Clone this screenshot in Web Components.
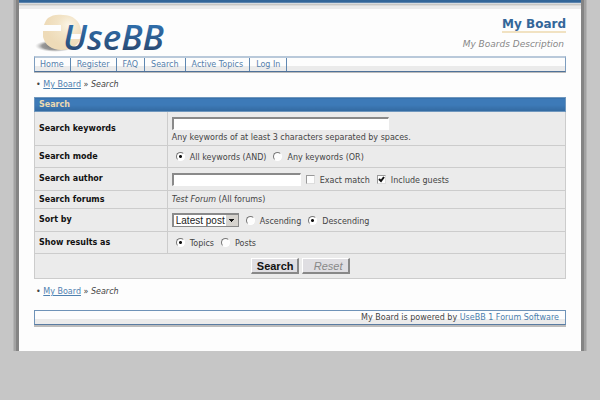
<!DOCTYPE html>
<html lang="en">
<head>
<meta charset="utf-8">
<title>My Board - Search</title>
<style>
html { background: #c6c6c6; }
body { margin: 0; font: 8px/12px "DejaVu Sans", Verdana, sans-serif; color: #444; }
board-crumbs:last-of-type { margin-bottom: 6px; }
</style>
</head>
<body>
<board-page>
  <board-header slot="header" name="My Board" description="My Boards Description"></board-header>
  <board-nav>
    <a href="#home">Home</a><a href="#register">Register</a><a href="#faq">FAQ</a><a href="#search">Search</a><a href="#active">Active Topics</a><a href="#login">Log In</a>
  </board-nav>
  <board-crumbs current="Search"><a href="#home">My Board</a></board-crumbs>
  <board-search></board-search>
  <board-crumbs current="Search"><a href="#home">My Board</a></board-crumbs>
  <board-footer>My Board is powered by <a href="#usebb">UseBB 1 Forum Software</a></board-footer>
</board-page>
<script>
function define(name, render) {
  customElements.define(name, class extends HTMLElement {
    constructor() {
      super();
      this.attachShadow({ mode: "open" });
    }
    connectedCallback() {
      if (this.shadowRoot.childNodes.length) return;
      const t = document.createElement("template");
      t.innerHTML = render(this);
      this.shadowRoot.append(t.content.cloneNode(true));
    }
  });
}

define("board-page", () => `
<style>
:host { display: block; margin: 0 13px; padding: 0 6px 0 6px;
  background:
    linear-gradient(90deg, #b4b4b4 1px, #a2a2a2 1px 3px, #848484 3px) left / 6px 100% no-repeat,
    linear-gradient(270deg, #b4b4b4 1px, #a2a2a2 1px 3px, #848484 3px) right / 6px 100% no-repeat; }
.strip { height: 9px; background: linear-gradient(#336699 2px, #5d84ad 2px 3px, #d8dcdf 3px 4px, #c9c7c3 4px 5px, #dcdcdc 5px 6px, #ebebeb 6px); }
main { background: #fdfdfd; padding: 0 15px 26px; }
</style>
<div class="strip"></div>
<main><slot name="header"></slot><slot></slot></main>`);

define("board-logo", () => `
<style>
:host { display: block; }
svg { display: block; overflow: visible; }
text { font: italic 600 35px "Open Sans", "Noto Sans", sans-serif; }
</style>
<svg width="150" height="46" viewBox="0 0 150 46" role="img" aria-label="UseBB">
  <defs>
    <linearGradient id="ink" x1="0" y1="0" x2="0" y2="1"><stop offset=".3" stop-color="#2f6ca8"/><stop offset=".8" stop-color="#2a4a74"/></linearGradient>
    <radialGradient id="globe" cx=".68" cy=".3" r=".6"><stop offset="0" stop-color="#fbf5e6"/><stop offset=".5" stop-color="#f2e3c6"/><stop offset="1" stop-color="#eedbb8"/></radialGradient>
    <radialGradient id="shade"><stop offset="0" stop-color="#777"/><stop offset=".65" stop-color="#999"/><stop offset="1" stop-color="#ccc" stop-opacity="0"/></radialGradient>
  </defs>
  <ellipse cx="21" cy="37" rx="20" ry="6" fill="url(#shade)"/>
  <path d="M14 9C18 6 23 5 29 6C39 6 46 12 47 21L47 26C46 36 38 41 27 41C18 41 11 36 9 28L9 22L27 22L27 16L10 16C11 13 12 11 14 9Z" fill="url(#globe)"/>
  <path d="M36 25H47V30H36Z" fill="#fdfdfd"/>
  <text x="29" y="41" fill="url(#ink)">UseBB</text>
</svg>`);

define("board-header", el => `
<style>
:host { display: flex; justify-content: space-between; align-items: flex-start; height: 47px; }
.title { text-align: right; padding-top: 8px; }
h1 { margin: 0 0 5px; display: inline-block; font-size: 12px; line-height: 14px; color: #336699; border-bottom: 2px solid #f1e2c2; }
p { margin: 0 2px 0 0; font-size: 9px; line-height: 12px; font-style: italic; color: #888; }
</style>
<board-logo></board-logo>
<div class="title"><h1>${el.getAttribute("name")}</h1><p>${el.getAttribute("description")}</p></div>`);

define("board-nav", () => `
<style>
:host { display: block; }
nav { display: flex; border: 1px solid #7d9dbf; border-top: 2px solid #b9c9da; border-bottom-color: #4f7299; background: linear-gradient(#fdfdfd 8px, #ebebeb 8px); box-shadow: 0 1px #bbb; }
::slotted(a) { padding: 0 6px; border-right: 1px solid #5f88b2; color: #5580ab; text-decoration: none; line-height: 13px; }
::slotted(a:first-child) { padding-left: 5px; }
</style>
<nav><slot></slot></nav>`);

define("board-crumbs", el => `
<style>
:host { display: block; padding: 7px 2px 6px; }
::slotted(a) { color: #4f81b0; }
nav { line-height: 12px; }
</style>
<nav>• <slot></slot> » <em>${el.getAttribute("current")}</em></nav>`);

define("board-search", () => `
<style>
:host { display: block; }
form { margin: 0; }
table { width: 100%; border-collapse: collapse; background: #ebebeb; }
th, td { border: 1px solid #ccc; padding: 0 4px; text-align: left; font-weight: normal; }
thead th { height: 13px; background: linear-gradient(#3d7ab8 50%, #33699f); border-color: #6f97be; color: #ecd9b0; font-weight: bold; line-height: 12px; }
tbody th { width: 25%; box-sizing: border-box; color: #111; font-weight: bold; }
td { color: #444; }
tbody tr { height: 22px; }
tbody tr.keys { height: 34px; }
tbody tr.tall { height: 23px; }
tbody tr.short { height: 18px; }
.line { display: flex; align-items: center; }
input[type=text], select { appearance: none; box-sizing: border-box; margin: 0; border: 1px solid #fff; border-top: 2px solid #8a8a8a; border-left: 2px solid #8a8a8a; background: #fff; border-radius: 0; height: 13px; padding: 0 2px; font: 8px "DejaVu Sans", sans-serif; }
.w1 { width: 217px; max-width: 100%; display: block; margin: 3px 0 2px; }
input.w1 { margin: 3px 0 2px; }
input.w2 { width: 129px; margin-right: 5px; }
select { height: 14px; width: 67px; font: 10px/11px "Liberation Sans", Arial, sans-serif; color: #222;
  background: linear-gradient(#111, #111) right 4px top 4px / 5px 1px no-repeat, linear-gradient(#111, #111) right 5px top 5px / 3px 1px no-repeat, linear-gradient(#111, #111) right 6px top 6px / 1px 1px no-repeat, linear-gradient(#d6d3ce, #d6d3ce) right / 12px 100% no-repeat, #fff;
  border-right-color: #888; border-bottom-color: #888; margin-right: 7px; }
input[type=radio], input[type=checkbox] { appearance: none; box-sizing: border-box; width: 9px; height: 9px; margin: 0 5px 0 0; background: #fdfdfd; border: 1px solid #fff; border-top-color: #777; border-left-color: #777; flex: none; }
input[type=radio] { border-radius: 50%; }
input[type=radio]:checked { background: radial-gradient(circle, #111 1px, #fff 2px); }
input[type=checkbox] { border-color: #999 #ddd #ddd #999; }
.tick { display: grid; }
.tick > * { grid-area: 1 / 1; }
.tick svg { pointer-events: none; }
label { margin-right: 7px; }
.line label { padding-top: 3px; }
.in { padding-left: 4px; }
.buttons { text-align: center; height: 24px; }
button { box-sizing: border-box; height: 16px; width: 48px; padding: 0 3px 0 0; border: 1px solid #fff; border-right: 2px solid #888; border-bottom: 2px solid #888; background: #dfdee2; font: bold 11px/12px "Liberation Sans", Arial, sans-serif; color: #111; text-align: right; }
button[type=reset] { font-weight: normal; font-style: italic; color: #888; padding-right: 5px; }
.pair { display: flex; justify-content: center; gap: 3px; }
</style>
<form onsubmit="return false">
<table>
  <thead><tr><th colspan="2">Search</th></tr></thead>
  <tbody>
    <tr class="keys"><th scope="row"><label for="kw">Search keywords</label></th><td><input class="w1" type="text" id="kw">Any keywords of at least 3 characters separated by spaces.</td></tr>
    <tr><th scope="row">Search mode</th><td><div class="line in"><input type="radio" name="mode" id="and" checked><label for="and">All keywords (AND)</label><input type="radio" name="mode" id="or"><label for="or">Any keywords (OR)</label></div></td></tr>
    <tr class="tall"><th scope="row"><label for="author">Search author</label></th><td><div class="line"><input class="w2" type="text" id="author"><input type="checkbox" id="exact"><label for="exact">Exact match</label><span class="tick"><input type="checkbox" id="guests" checked><svg width="9" height="9" viewBox="0 0 9 9"><path d="M2 4L4 6L7 2" fill="none" stroke="#111" stroke-width="2"/></svg></span><label for="guests">Include guests</label></div></td></tr>
    <tr class="short"><th scope="row">Search forums</th><td><em>Test Forum</em> (All forums)</td></tr>
    <tr class="tall"><th scope="row"><label for="sort">Sort by</label></th><td><div class="line"><select id="sort"><option>Latest post</option></select><input type="radio" name="dir" id="asc"><label for="asc">Ascending</label><input type="radio" name="dir" id="desc" checked><label for="desc">Descending</label></div></td></tr>
    <tr><th scope="row">Show results as</th><td><div class="line in"><input type="radio" name="show" id="topics" checked><label for="topics">Topics</label><input type="radio" name="show" id="posts"><label for="posts">Posts</label></div></td></tr>
    <tr><td class="buttons" colspan="2"><div class="pair"><button type="submit">Search</button><button type="reset">Reset</button></div></td></tr>
  </tbody>
</table>
</form>`);

define("board-footer", () => `
<style>
:host { display: block; }
footer { text-align: right; padding: 0 6px; line-height: 13px; border: 1px solid #6f93b8; border-bottom: 1px solid #5a7ca2; background: linear-gradient(#fdfdfd 8px, #ebebeb 8px); box-shadow: 0 2px #bcbcbc; }
::slotted(a) { color: #4c7dad; text-decoration: none; }
</style>
<footer><slot></slot></footer>`);
</script>
</body>
</html>
